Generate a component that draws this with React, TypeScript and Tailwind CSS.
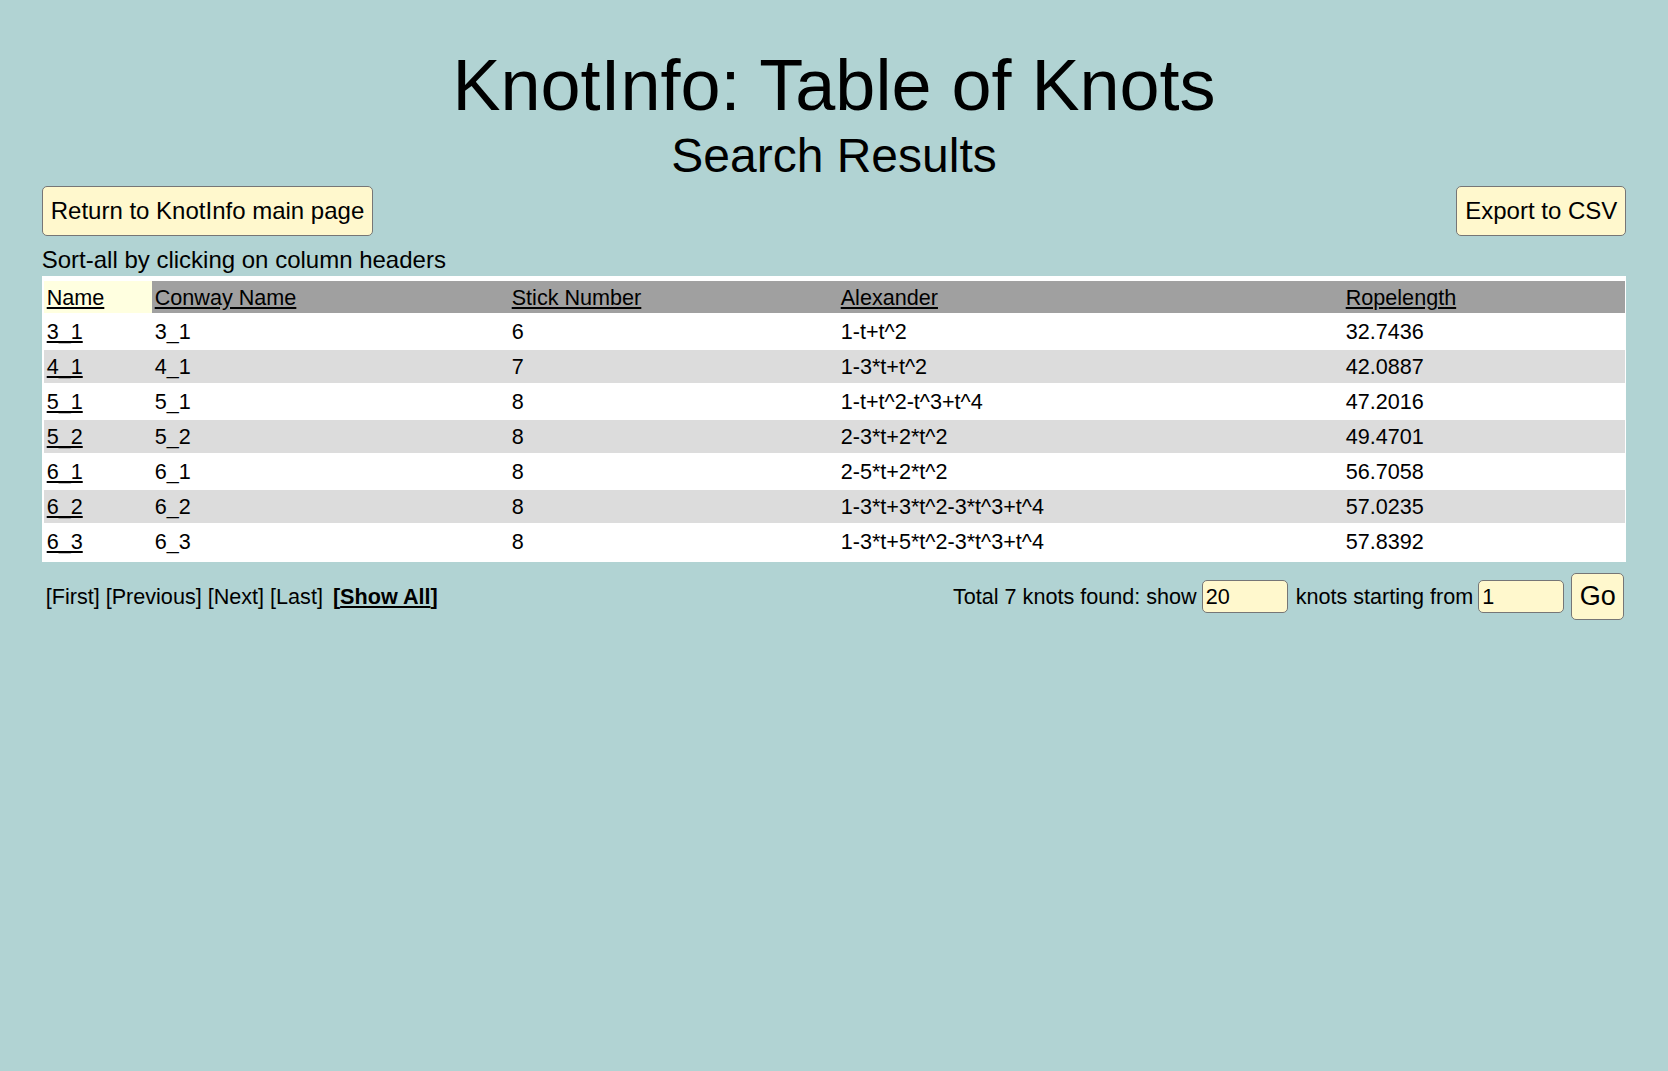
import React from "react";

const knots = [
  { name: "3_1", conway: "3_1", stick: "6", alexander: "1-t+t^2", rope: "32.7436" },
  { name: "4_1", conway: "4_1", stick: "7", alexander: "1-3*t+t^2", rope: "42.0887" },
  { name: "5_1", conway: "5_1", stick: "8", alexander: "1-t+t^2-t^3+t^4", rope: "47.2016" },
  { name: "5_2", conway: "5_2", stick: "8", alexander: "2-3*t+2*t^2", rope: "49.4701" },
  { name: "6_1", conway: "6_1", stick: "8", alexander: "2-5*t+2*t^2", rope: "56.7058" },
  { name: "6_2", conway: "6_2", stick: "8", alexander: "1-3*t+3*t^2-3*t^3+t^4", rope: "57.0235" },
  { name: "6_3", conway: "6_3", stick: "8", alexander: "1-3*t+5*t^2-3*t^3+t^4", rope: "57.8392" },
];

function YellowButton({ children }: { children: React.ReactNode }) {
  return (
    <button className="h-[50px] rounded-[5px] border border-[#767676] bg-[#fff8cd] px-[8px] text-[24px] leading-[28px] text-black">
      {children}
    </button>
  );
}

export default function App() {
  return (
    <div className="min-h-[1071px] bg-[#b1d3d3] font-['Liberation_Sans',Arial,sans-serif] text-black">
      <div className="mx-auto w-[95%] pt-[44px]">
        <h1 className="text-center text-[72px] font-normal leading-[83px]">KnotInfo: Table of Knots</h1>
        <h2 className="mt-[1px] text-center text-[48px] font-normal leading-[55px]">Search Results</h2>

        <div className="mt-[3px] flex justify-between">
          <YellowButton>Return to KnotInfo main page</YellowButton>
          <YellowButton>Export to CSV</YellowButton>
        </div>

        <p className="mt-[10px] text-[24px] leading-[28px]">Sort-all by clicking on column headers</p>

        <div className="mt-[2px] bg-white pb-[2px] pl-[2px] pr-[1px] pt-[3px]">
          <table className="w-full table-fixed border-separate border-spacing-x-0 border-spacing-y-[2px] text-left text-[21.6px] leading-[25px]">
            <colgroup>
              <col className="w-[108px]" />
              <col className="w-[357px]" />
              <col className="w-[329px]" />
              <col className="w-[505px]" />
              <col />
            </colgroup>
            <thead>
              <tr className="h-[32px]">
                <th className="bg-[#ffffe0] pl-[3px] align-middle font-normal">
                  <a href="#" className="underline">Name</a>
                </th>
                <th className="bg-[#a0a0a0] pl-[3px] align-middle font-normal">
                  <a href="#" className="underline">Conway Name</a>
                </th>
                <th className="bg-[#a0a0a0] pl-[3px] align-middle font-normal">
                  <a href="#" className="underline">Stick Number</a>
                </th>
                <th className="bg-[#a0a0a0] pl-[3px] align-middle font-normal">
                  <a href="#" className="underline">Alexander</a>
                </th>
                <th className="bg-[#a0a0a0] pl-[3px] align-middle font-normal">
                  <a href="#" className="underline">Ropelength</a>
                </th>
              </tr>
            </thead>
            <tbody>
              {knots.map((k, i) => (
                <tr key={k.name} className={i % 2 === 1 ? "h-[33px] bg-[#dcdcdc]" : "h-[33px] bg-white"}>
                  <td className="pl-[3px] align-middle">
                    <a href="#" className="underline">{k.name}</a>
                  </td>
                  <td className="pl-[3px] align-middle">{k.conway}</td>
                  <td className="pl-[3px] align-middle">{k.stick}</td>
                  <td className="pl-[3px] align-middle">{k.alexander}</td>
                  <td className="pl-[3px] align-middle">{k.rope}</td>
                </tr>
              ))}
            </tbody>
          </table>
        </div>

        <div className="mt-[11px] flex items-center justify-between pl-[4px] pr-[2px] text-[21.6px] leading-[25px]">
          <div>
            [First] [Previous] [Next] [Last]
            <span className="ml-[10px] font-bold">
              [<a href="#" className="underline">Show All</a>]
            </span>
          </div>
          <div className="flex items-center">
            <span>Total 7 knots found: show</span>
            <input
              defaultValue="20"
              className="ml-[5px] h-[33px] w-[86px] rounded-[5px] border border-[#767676] bg-[#fff8cd] px-[3px] text-[21.6px] text-black outline-none"
            />
            <span className="ml-[8px]">knots starting from</span>
            <input
              defaultValue="1"
              className="ml-[5px] h-[33px] w-[86px] rounded-[5px] border border-[#767676] bg-[#fff8cd] px-[3px] text-[21.6px] text-black outline-none"
            />
            <button className="ml-[7px] h-[47px] w-[53px] rounded-[5px] border border-[#767676] bg-[#fff8cd] text-[27px] leading-[31px]">
              Go
            </button>
          </div>
        </div>
      </div>
    </div>
  );
}
